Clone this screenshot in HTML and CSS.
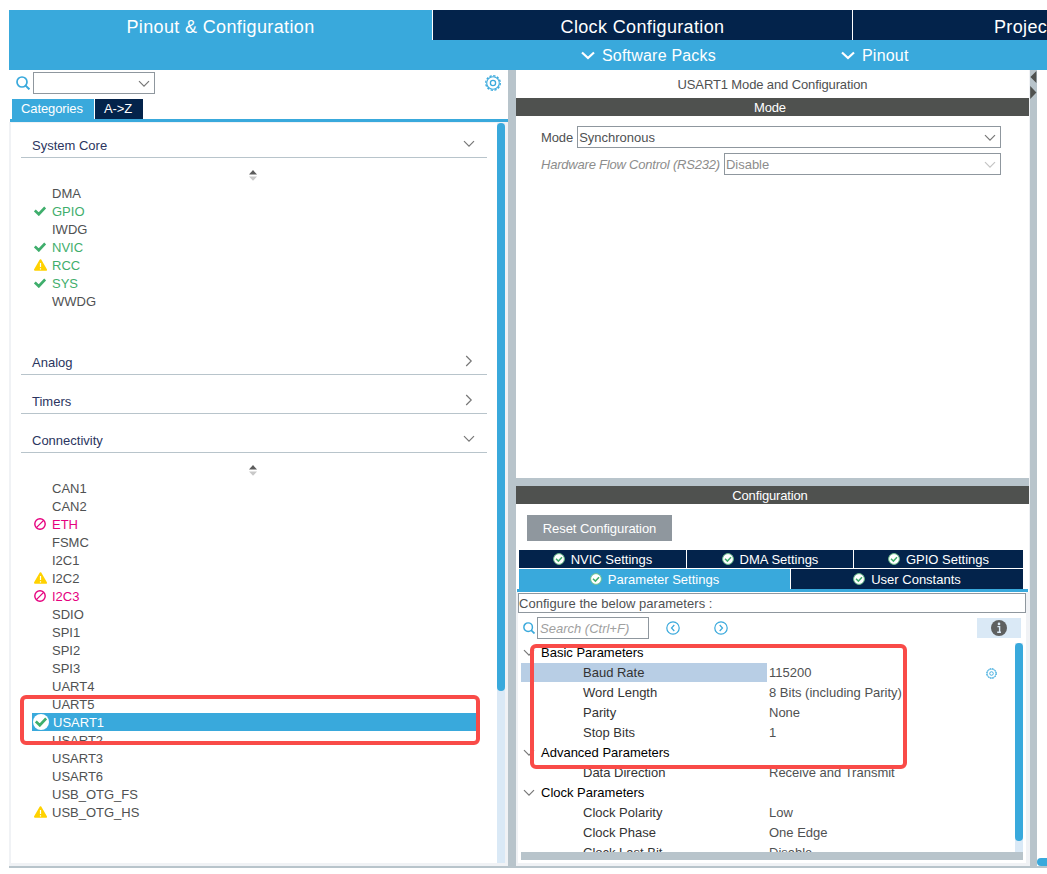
FILE: index.html
```html
<!DOCTYPE html>
<html lang="en">
<head>
    <meta charset="UTF-8">
    <meta name="viewport" content="width=device-width, initial-scale=1.0">
    <title>Pinout &amp; Configuration</title>
    <link rel="stylesheet" href="styles.css">
</head>
<body>
    <svg class="sprite">
        <symbol id="check" viewBox="0 0 12 10"><path d="M.8 4.4L4.8 8.2L11.2 1.4" fill="none" stroke="#3fae6c" stroke-width="2.8"/></symbol>
        <symbol id="warn" viewBox="0 0 13 12"><path d="M6.5 1.2L12 10.8H1z" fill="#ffd200" stroke="#ffd200" stroke-width="2" stroke-linejoin="round"/><path d="M6.5 4v4M6.5 9.2v1.3" stroke="#fff" stroke-width="1.2"/></symbol>
        <symbol id="ban" viewBox="0 0 12 12"><circle cx="6" cy="6" r="5.2" fill="none" stroke="#e6007e" stroke-width="1.4"/><path d="M2.4 9.6L9.6 2.4" stroke="#e6007e" stroke-width="1.3"/></symbol>
        <symbol id="ok" viewBox="0 0 12 12"><circle cx="6" cy="6" r="5.4" fill="#fff" stroke="#6cc08b" stroke-width="1"/><path d="M3 5.8L5.4 8.1L9 4.3" fill="none" stroke="#3fae6c" stroke-width="1.5"/></symbol>
        <symbol id="down" viewBox="0 0 12 8"><path d="M1 1.2L6 6.2L11 1.2" fill="none" stroke="currentColor" stroke-width="1.2"/></symbol>
        <symbol id="right" viewBox="0 0 8 12"><path d="M1.2 1L6.2 6L1.2 11" fill="none" stroke="currentColor" stroke-width="1.2"/></symbol>
        <symbol id="search" viewBox="0 0 14 14"><circle cx="6" cy="6" r="5" fill="none" stroke="#39a9dc" stroke-width="1.7"/><path d="M9.4 9.4L13.4 13.4" stroke="#39a9dc" stroke-width="2"/></symbol>
        <symbol id="gear" viewBox="0 0 16 16"><circle cx="8" cy="8" r="7.3" fill="none" stroke="#39a9dc" stroke-width="1.3" stroke-dasharray="2.3 1.522"/><circle cx="8" cy="8" r="6.3" fill="none" stroke="#39a9dc" stroke-width="1.1"/><circle cx="8" cy="8" r="2.6" fill="none" stroke="#39a9dc" stroke-width="1.3"/></symbol>
        <symbol id="sort" viewBox="0 0 8 11"><path d="M4 0L8 4.6H0z" fill="#5c5c5c"/><path d="M0 6.6H8L4 10.8z" fill="#c8c8c8"/></symbol>
    </svg>

    <div class="app">
        <header>
            <nav class="main-tabs">
                <div class="main-tab active">Pinout &amp; Configuration</div>
                <div class="main-tab">Clock Configuration</div>
                <div class="main-tab project">Project Manager</div>
            </nav>
            <div class="sub-menu">
                <div class="packs"><svg><path d="M1 1.5L7 7L13 1.5"/></svg>Software Packs</div>
                <div class="pinout"><svg><path d="M1 1.5L7 7L13 1.5"/></svg>Pinout</div>
            </div>
        </header>

        <main>
            <aside>
                <div class="finder">
                    <svg class="search-icon"><use href="#search"/></svg>
                    <div class="combo"><svg class="chev"><use href="#down"/></svg></div>
                    <svg class="gear"><use href="#gear"/></svg>
                </div>
                <div class="side-tabs">
                    <div class="side-tab active">Categories</div>
                    <div class="side-tab az">A-&gt;Z</div>
                </div>
                <div class="tree-wrap">
                    <div class="tree">
                        <div class="group first">System Core<svg class="chev"><use href="#down"/></svg></div>
                        <div class="items">
                            <svg class="sort"><use href="#sort"/></svg>
                            <div class="item">DMA</div>
                            <div class="item green"><svg class="check"><use href="#check"/></svg>GPIO</div>
                            <div class="item">IWDG</div>
                            <div class="item green"><svg class="check"><use href="#check"/></svg>NVIC</div>
                            <div class="item green"><svg class="warn"><use href="#warn"/></svg>RCC</div>
                            <div class="item green"><svg class="check"><use href="#check"/></svg>SYS</div>
                            <div class="item">WWDG</div>
                        </div>
                        <div class="group">Analog<svg class="chev-right"><use href="#right"/></svg></div>
                        <div class="group">Timers<svg class="chev-right"><use href="#right"/></svg></div>
                        <div class="group">Connectivity<svg class="chev"><use href="#down"/></svg></div>
                        <div class="items">
                            <svg class="sort"><use href="#sort"/></svg>
                            <div class="item">CAN1</div>
                            <div class="item">CAN2</div>
                            <div class="item pink"><svg class="ban"><use href="#ban"/></svg>ETH</div>
                            <div class="item">FSMC</div>
                            <div class="item">I2C1</div>
                            <div class="item"><svg class="warn"><use href="#warn"/></svg>I2C2</div>
                            <div class="item pink"><svg class="ban"><use href="#ban"/></svg>I2C3</div>
                            <div class="item">SDIO</div>
                            <div class="item">SPI1</div>
                            <div class="item">SPI2</div>
                            <div class="item">SPI3</div>
                            <div class="item">UART4</div>
                            <div class="item">UART5</div>
                            <div class="item selected"><span class="disc"><svg class="check big"><use href="#check"/></svg></span>USART1</div>
                            <div class="item">USART2</div>
                            <div class="item">USART3</div>
                            <div class="item">USART6</div>
                            <div class="item">USB_OTG_FS</div>
                            <div class="item"><svg class="warn"><use href="#warn"/></svg>USB_OTG_HS</div>
                        </div>
                    </div>
                    <div class="scroll"><div class="thumb"></div></div>
                </div>
            </aside>

            <section class="detail">
                <div class="mode-panel">
                    <h2>USART1 Mode and Configuration</h2>
                    <div class="bar">Mode</div>
                    <div class="field">
                        <label>Mode</label>
                        <div class="combo">Synchronous<svg class="chev"><use href="#down"/></svg></div>
                    </div>
                    <div class="field disabled">
                        <label>Hardware Flow Control (RS232)</label>
                        <div class="combo">Disable<svg class="chev"><use href="#down"/></svg></div>
                    </div>
                </div>

                <div class="config-panel">
                    <div class="bar">Configuration</div>
                    <button class="reset">Reset Configuration</button>
                    <div class="tabs">
                        <div class="tab"><svg><use href="#ok"/></svg>NVIC Settings</div>
                        <div class="tab"><svg><use href="#ok"/></svg>DMA Settings</div>
                        <div class="tab"><svg><use href="#ok"/></svg>GPIO Settings</div>
                    </div>
                    <div class="tabs second">
                        <div class="tab active"><svg><use href="#ok"/></svg>Parameter Settings</div>
                        <div class="tab"><svg><use href="#ok"/></svg>User Constants</div>
                    </div>
                    <div class="tab-line"></div>
                    <div class="tab-body">
                        <div class="hint">Configure the below parameters :</div>
                        <div class="tools">
                            <svg class="search-icon"><use href="#search"/></svg>
                            <div class="search-box">Search (Ctrl+F)</div>
                            <svg class="nav" viewBox="0 0 14 14"><circle cx="7" cy="7" r="6.2"/><path d="M8.3 4L5.5 7L8.3 10"/></svg>
                            <svg class="nav next" viewBox="0 0 14 14"><circle cx="7" cy="7" r="6.2"/><path d="M5.7 4L8.5 7L5.7 10"/></svg>
                            <div class="info"><svg viewBox="0 0 16 16"><circle cx="8" cy="8" r="8" fill="#5e6060"/><path d="M6.4 6.6H8.6V12M6.2 12.2H10" fill="none" stroke="#dae9f6" stroke-width="1.4"/><circle cx="8" cy="3.9" r="1.3" fill="#dae9f6"/></svg></div>
                        </div>
                        <div class="params-wrap">
                            <div class="params">
                                <div class="cat"><svg class="chev"><use href="#down"/></svg>Basic Parameters</div>
                                <div class="param current"><span>Baud Rate</span><b>115200</b><svg class="gear"><use href="#gear"/></svg></div>
                                <div class="param"><span>Word Length</span><b>8 Bits (including Parity)</b></div>
                                <div class="param"><span>Parity</span><b>None</b></div>
                                <div class="param"><span>Stop Bits</span><b>1</b></div>
                                <div class="cat"><svg class="chev"><use href="#down"/></svg>Advanced Parameters</div>
                                <div class="param"><span>Data Direction</span><b>Receive and Transmit</b></div>
                                <div class="cat"><svg class="chev"><use href="#down"/></svg>Clock Parameters</div>
                                <div class="param"><span>Clock Polarity</span><b>Low</b></div>
                                <div class="param"><span>Clock Phase</span><b>One Edge</b></div>
                                <div class="param"><span>Clock Last Bit</span><b>Disable</b></div>
                            </div>
                            <div class="scroll"><div class="thumb"></div></div>
                        </div>
                        <div class="h-scroll"></div>
                    </div>
                </div>
            </section>

            <div class="divider">
                <svg viewBox="0 0 7 30"><path d="M6.4 1V13L.4 7zM.2 16V29L6.4 22.5z" fill="#4f514f"/></svg>
            </div>
            <div class="canvas"><div class="canvas-scroll"></div></div>
        </main>

        <div class="mark mark-usart"></div>
        <div class="mark mark-params"></div>
    </div>
</body>
</html>
```
FILE: styles.css
```css
* {
    box-sizing: border-box;
}

body {
    margin: 0;
    padding: 10px 0 0 9px;
    height: 874px;
    font-family: 'Liberation Sans', Arial, sans-serif;
    font-size: 13px;
    color: #4f5152;
    background: #fff;
    overflow: hidden;
}

svg {
    display: block;
    flex: none;
}

.sprite {
    position: absolute;
    width: 0;
    height: 0;
}

.app {
    width: 1038px;
    height: 858px;
    overflow: hidden;
}

/* header */
header {
    height: 60px;
    background: #39a9dc;
    color: #fff;
}

.main-tabs {
    display: flex;
    gap: 1px;
    height: 30px;
    background: #fff;
}

.main-tab {
    width: 419px;
    flex: none;
    background: #03234b;
    text-align: center;
    font-size: 18px;
    line-height: 34px;
    letter-spacing: 0.36px;
}

.main-tab.active {
    width: 423px;
    background: #39a9dc;
}

.main-tab.project {
    padding-left: 141px;
    text-align: left;
    white-space: nowrap;
}

.sub-menu {
    display: flex;
    height: 30px;
    padding: 2px 0 0 572px;
    font-size: 16px;
    letter-spacing: 0.2px;
}

.sub-menu div {
    display: flex;
    align-items: center;
    gap: 7px;
}

.sub-menu .packs {
    width: 260px;
}

.sub-menu svg {
    width: 14px;
    height: 9px;
    margin-bottom: 1px;
    fill: none;
    stroke: #fff;
    stroke-width: 2.2;
}

main {
    display: flex;
    height: 798px;
    border-bottom: 2px solid #b8c4cb;
}

.chev {
    width: 12px;
    height: 8px;
    color: #777;
}

.combo {
    display: flex;
    align-items: center;
    height: 22px;
    border: 1px solid #8f979e;
    padding: 0 4px 0 1px;
}

.combo .chev {
    margin: 1px 0 0 auto;
}

.scroll {
    width: 8px;
    background: #dae9f6;
}

.thumb {
    border-radius: 4px;
    background: #39a9dc;
}

/* peripherals list */
aside {
    width: 499px;
    flex: none;
}

.finder {
    display: flex;
    align-items: center;
    height: 29px;
    padding: 0 7px 3px;
}

.finder .search-icon {
    width: 14px;
    height: 14px;
    margin-right: 3px;
}

.finder .combo {
    width: 122px;
}

.gear {
    width: 16px;
    height: 16px;
    margin-left: auto;
}

.side-tabs {
    display: flex;
    gap: 1px;
    height: 23px;
    margin: 0 0 0 1px;
    padding-left: 2px;
    border-bottom: 3px solid #39a9dc;
}

.side-tab {
    width: 82px;
    height: 20px;
    padding-left: 9px;
    background: #39a9dc;
    color: #fff;
    line-height: 20px;
    letter-spacing: -0.1px;
}

.side-tab.az {
    width: 48px;
    background: #03234b;
}

.tree-wrap {
    display: flex;
    height: 744px;
    border: solid #f0f2f5;
    border-width: 1px 3px 3px 2px;
}

.tree {
    flex: 1;
    padding: 0 10px;
}

.tree-wrap .thumb {
    height: 568px;
}

.group {
    position: relative;
    display: flex;
    justify-content: space-between;
    height: 39px;
    padding: 18px 12px 0 11px;
    border-bottom: 1px solid #b8c4cb;
    color: #2b3560;
    line-height: 17px;
}

.group.first {
    height: 35px;
    padding-top: 14px;
}

.group .chev {
    margin-top: 3px;
}

.chev-right {
    width: 8px;
    height: 12px;
    margin: 1px 2px 0 0;
    color: #777;
}

.items {
    padding: 12px 0 26px 11px;
}

.sort {
    width: 8px;
    height: 11px;
    margin: 0 0 3px 217px;
}

.item {
    position: relative;
    height: 18px;
    width: 446px;
    padding-left: 20px;
    line-height: 19px;
}

.item > svg,
.disc {
    position: absolute;
    left: 2px;
    top: 3px;
}

.check {
    width: 12px;
    height: 10px;
}

.item > .check {
    left: 2px;
    top: 4px;
}

.warn {
    width: 13px;
    height: 12px;
}

.ban {
    width: 12px;
    height: 12px;
}

.disc {
    display: flex;
    align-items: center;
    justify-content: center;
    left: 1px;
    top: 1px;
    width: 16px;
    height: 16px;
    border-radius: 50%;
    background: #fff;
}

.green {
    color: #3fae6c;
}

.pink {
    color: #e6007e;
}

.selected {
    padding-left: 21px;
    background: #39a9dc;
    color: #fff;
}

/* right side */
.detail {
    width: 521px;
    flex: none;
    border-left: 8px solid #b8c4cb;
}

.mode-panel {
    height: 416px;
    border-bottom: 8px solid #b8c4cb;
}

h2 {
    margin: 0;
    height: 28px;
    font-size: 13px;
    font-weight: normal;
    line-height: 29px;
    text-align: center;
    letter-spacing: -0.12px;
}

.bar {
    height: 18px;
    margin-bottom: 10px;
    padding-right: 5px;
    background: #4f514f;
    color: #fff;
    line-height: 19px;
    text-align: center;
    letter-spacing: -0.15px;
}

.field {
    display: flex;
    align-items: center;
    margin-bottom: 5px;
    padding: 0 28px 0 25px;
}

.field label {
    margin-right: 4px;
    letter-spacing: -0.1px;
}

.field .combo {
    flex: 1;
}

.disabled {
    color: #8c8c8c;
}

.disabled label {
    font-style: italic;
    letter-spacing: -0.21px;
}

.disabled .chev {
    color: #c4c4c4;
}

.config-panel .bar {
    margin-bottom: 11px;
}

.reset {
    display: block;
    width: 145px;
    height: 26px;
    margin: 0 0 9px 11px;
    padding: 0;
    border: 0;
    background: #8f979e;
    color: #fff;
    font: 13px/27px 'Liberation Sans', Arial, sans-serif;
    letter-spacing: -0.08px;
}

.tabs {
    display: grid;
    grid-template-columns: 167px 166px 169px;
    gap: 1px;
    height: 18px;
    margin: 0 0 1px 3px;
}

.tabs.second {
    grid-template-columns: 271px 232px;
    height: 20px;
    margin-bottom: 0;
}

.tab {
    display: flex;
    align-items: center;
    justify-content: center;
    gap: 6px;
    background: #03234b;
    color: #fff;
}

.tab.active {
    background: #39a9dc;
}

.tab svg {
    width: 12px;
    height: 12px;
}

.tab-line {
    height: 3px;
    margin: 0 1px;
    background: #39a9dc;
}

.tab-body {
    height: 274px;
    padding: 1px 0 0;
    border: solid #f0f2f5;
    border-width: 0 3px 3px 2px;
}

.hint {
    width: 508px;
    height: 20px;
    border: 1px solid #8f979e;
    line-height: 19px;
    letter-spacing: 0.04px;
}

.tools {
    display: flex;
    align-items: center;
    height: 29px;
    padding-left: 5px;
}

.tools .search-icon {
    width: 12px;
    height: 12px;
    margin-right: 2px;
}

.search-box {
    width: 112px;
    height: 22px;
    padding-left: 2px;
    border: 1px solid #8f979e;
    color: #a0a0a0;
    font-style: italic;
    line-height: 21px;
}

.nav {
    width: 14px;
    height: 14px;
    margin-left: 17px;
    fill: none;
    stroke: #39a9dc;
    stroke-width: 1.2;
}

.nav.next {
    margin-left: 34px;
}

.info {
    display: flex;
    align-items: center;
    justify-content: center;
    width: 44px;
    height: 20px;
    margin: 0 5px 0 auto;
    background: #dae9f6;
}

.info svg {
    width: 16px;
    height: 16px;
}

.params-wrap {
    display: flex;
    height: 210px;
    margin: 0 3px;
}

.params {
    flex: 1;
    overflow: hidden;
}

.params-wrap .scroll {
    margin-top: 1px;
}

.params-wrap .thumb {
    height: 198px;
}

.cat {
    display: flex;
    align-items: center;
    gap: 6px;
    height: 20px;
    padding-left: 2px;
    color: #000;
    line-height: 21px;
}

.cat .chev {
    margin-top: 1px;
}

.param {
    display: flex;
    align-items: center;
    height: 20px;
    line-height: 21px;
}

.param span {
    width: 246px;
    padding-left: 62px;
    color: #333;
}

.param b {
    padding-left: 2px;
    font-weight: normal;
}

.current span {
    height: 19px;
    margin-top: 1px;
    line-height: 19px;
    background: #b8cee5;
}

.current .gear {
    width: 11px;
    height: 11px;
    margin: 2px 18px 0 auto;
}

.h-scroll {
    width: 502px;
    height: 8px;
    margin-left: 3px;
    background: #b8c4cb;
}

.divider {
    width: 8px;
    flex: none;
    border-left: 1px solid #f0f2f5;
    background: #b8c4cb;
}

.divider svg {
    width: 7px;
    height: 30px;
}

.canvas {
    display: flex;
    flex: 1;
    align-items: flex-end;
}

.canvas-scroll {
    width: 100%;
    height: 8px;
    border-radius: 4px 0 0 4px;
    background: #39a9dc;
}

/* highlight frames laid over the panels */
.mark {
    position: absolute;
    border: 4px solid #f94b48;
    border-radius: 6px;
}

.mark-usart {
    left: 20px;
    top: 695px;
    width: 460px;
    height: 50px;
}

.mark-params {
    left: 530px;
    top: 644px;
    width: 377px;
    height: 125px;
}
```
